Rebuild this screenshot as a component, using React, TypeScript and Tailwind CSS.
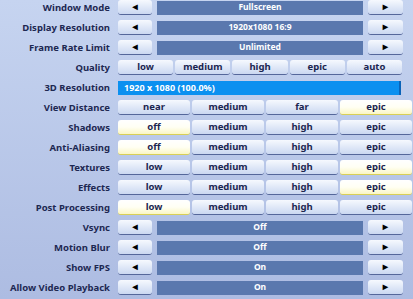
import { ReactNode } from 'react'

type Row =
  | { kind: 'arrow'; label: string; value: string }
  | { kind: 'levels'; label: string; options: string[]; selected: number; wide?: boolean }
  | { kind: 'bar'; label: string; value: string }

const rows: Row[] = [
  { kind: 'arrow', label: 'Window Mode', value: 'Fullscreen' },
  { kind: 'arrow', label: 'Display Resolution', value: '1920x1080 16:9' },
  { kind: 'arrow', label: 'Frame Rate Limit', value: 'Unlimited' },
  { kind: 'levels', label: 'Quality', options: ['low', 'medium', 'high', 'epic', 'auto'], selected: -1 },
  { kind: 'bar', label: '3D Resolution', value: '1920 x 1080 (100.0%)' },
  { kind: 'levels', label: 'View Distance', options: ['near', 'medium', 'far', 'epic'], selected: 3, wide: true },
  { kind: 'levels', label: 'Shadows', options: ['off', 'medium', 'high', 'epic'], selected: 0, wide: true },
  { kind: 'levels', label: 'Anti-Aliasing', options: ['off', 'medium', 'high', 'epic'], selected: 0, wide: true },
  { kind: 'levels', label: 'Textures', options: ['low', 'medium', 'high', 'epic'], selected: 3, wide: true },
  { kind: 'levels', label: 'Effects', options: ['low', 'medium', 'high', 'epic'], selected: 3, wide: true },
  { kind: 'levels', label: 'Post Processing', options: ['low', 'medium', 'high', 'epic'], selected: 0, wide: true },
  { kind: 'arrow', label: 'Vsync', value: 'Off' },
  { kind: 'arrow', label: 'Motion Blur', value: 'Off' },
  { kind: 'arrow', label: 'Show FPS', value: 'On' },
  { kind: 'arrow', label: 'Allow Video Playback', value: 'On' },
]

function Btn({ children, active, className = '' }: { children: ReactNode; active?: boolean; className?: string }) {
  return (
    <div
      className={`h-[15px] rounded-[3px] flex items-center justify-center text-[9.5px] font-bold text-[#1b2550] leading-none border-b-[1.5px] ${
        active
          ? 'bg-gradient-to-b from-[#ffffff] via-[#fffff4] to-[#fbf6c4] border-[#d9cf55]'
          : 'bg-gradient-to-b from-[#f6f9fe] to-[#cbd8f1] border-[#55679a]'
      } ${className}`}
    >
      {children}
    </div>
  )
}

export default function App() {
  return (
    <div
      className="w-[413px] h-[299px] overflow-hidden bg-gradient-to-b from-[#c6d4f0] to-[#adbce2]"
      style={{ fontFamily: '"Noto Sans", "Open Sans", sans-serif' }}
    >
      <div className="flex flex-col gap-[5px]">
        {rows.map((row) => (
          <div key={row.label} className="flex items-center h-[15px]">
            <div className="w-[110px] text-right text-[9.5px] font-bold text-[#1d2852] leading-none whitespace-nowrap">
              {row.label}
            </div>
            <div className="ml-[8px]">
              {row.kind === 'arrow' && (
                <div className="flex items-center gap-[5px]">
                  <Btn className="w-[34px] text-[8px] text-black">◄</Btn>
                  <div className="w-[206px] h-[14px] bg-[#5a78ae] flex items-center justify-center text-[8.5px] font-bold text-white leading-none">
                    {row.value}
                  </div>
                  <Btn className="w-[35px] text-[8px] text-black">►</Btn>
                </div>
              )}
              {row.kind === 'levels' && (
                <div className={`flex gap-[2px] ${row.wide ? 'w-[294px]' : 'w-[284px]'}`}>
                  {row.options.map((o, i) => (
                    <Btn key={o} active={i === row.selected} className="flex-1">
                      {o}
                    </Btn>
                  ))}
                </div>
              )}
              {row.kind === 'bar' && (
                <div className="w-[283px] h-[14px] bg-[#0b90f0] border-r-2 border-[#0a63b8] flex items-center pl-[6px] text-[9px] font-bold text-white leading-none">
                  {row.value}
                </div>
              )}
            </div>
          </div>
        ))}
      </div>
    </div>
  )
}
